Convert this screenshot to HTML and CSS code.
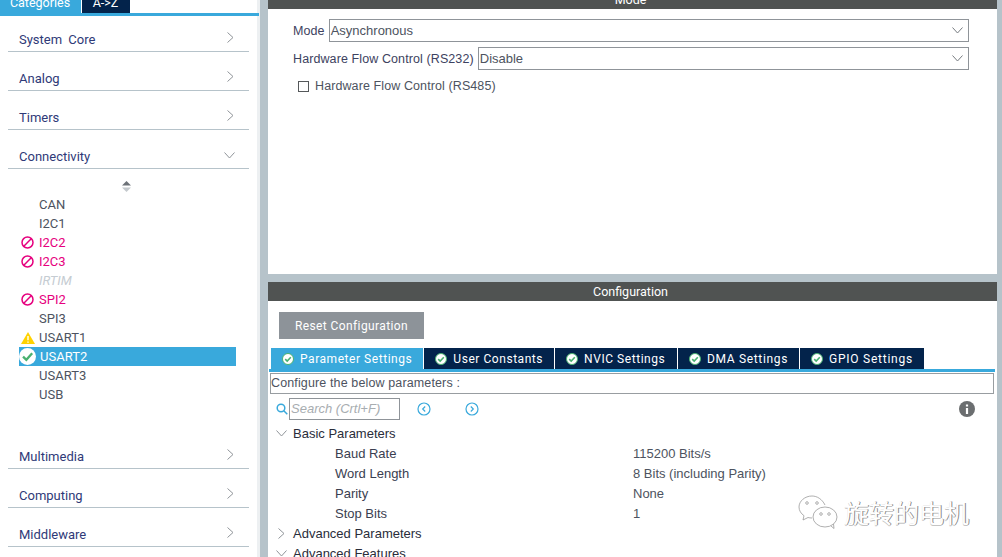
FILE: index.html
```html
<!DOCTYPE html>
<html lang="en">
<head>
<meta charset="utf-8">
<title>USART2 Configuration</title>
<link rel="stylesheet" href="styles.css">
</head>
<body>
<aside class="sidebar">
  <nav class="side-tabs">
    <div class="side-tab side-tab-active">Categories</div>
    <div class="side-tab">A-&gt;Z</div>
  </nav>
  <div class="cats">
    <div class="acc"><span>System Core</span><svg class="chev-r" viewBox="0 0 7 11"><path d="M.5.5 6 5.5.5 10.5"/></svg></div>
    <div class="acc"><span>Analog</span><svg class="chev-r" viewBox="0 0 7 11"><path d="M.5.5 6 5.5.5 10.5"/></svg></div>
    <div class="acc"><span>Timers</span><svg class="chev-r" viewBox="0 0 7 11"><path d="M.5.5 6 5.5.5 10.5"/></svg></div>
    <div class="acc"><span>Connectivity</span><svg class="chev-d" viewBox="0 0 11 7"><path d="M.5.5 5.5 6 10.5.5"/></svg></div>
    <div class="peri-list">
      <svg class="sort" viewBox="0 0 9 11"><path class="sort-up" d="M4.5 0 9 4.5H0z"/><path class="sort-down" d="M0 6.5H9L4.5 11z"/></svg>
      <div class="peri"><i class="slot"></i>CAN</div>
      <div class="peri"><i class="slot"></i>I2C1</div>
      <div class="peri peri-block"><i class="slot"><svg class="ic-block" viewBox="0 0 13 13"><circle cx="6.5" cy="6.5" r="5.5"/><path d="M2.8 10.2 10.2 2.8"/></svg></i>I2C2</div>
      <div class="peri peri-block"><i class="slot"><svg class="ic-block" viewBox="0 0 13 13"><circle cx="6.5" cy="6.5" r="5.5"/><path d="M2.8 10.2 10.2 2.8"/></svg></i>I2C3</div>
      <div class="peri peri-off"><i class="slot"></i>IRTIM</div>
      <div class="peri peri-block"><i class="slot"><svg class="ic-block" viewBox="0 0 13 13"><circle cx="6.5" cy="6.5" r="5.5"/><path d="M2.8 10.2 10.2 2.8"/></svg></i>SPI2</div>
      <div class="peri"><i class="slot"></i>SPI3</div>
      <div class="peri"><i class="slot"><svg class="ic-warn" viewBox="0 0 14 12"><path class="warn-bg" d="M7 0 14 12H0z"/><path class="warn-mark" d="M7 4v4.2M7 9.4v1.3"/></svg></i>USART1</div>
      <div class="peri peri-sel"><i class="slot"><svg class="ic-ok" viewBox="0 0 16 16"><circle cx="8" cy="8" r="8"/><path d="M3.8 8.2 6.9 11.2 12.4 5"/></svg></i>USART2</div>
      <div class="peri"><i class="slot"></i>USART3</div>
      <div class="peri"><i class="slot"></i>USB</div>
    </div>
    <div class="acc"><span>Multimedia</span><svg class="chev-r" viewBox="0 0 7 11"><path d="M.5.5 6 5.5.5 10.5"/></svg></div>
    <div class="acc"><span>Computing</span><svg class="chev-r" viewBox="0 0 7 11"><path d="M.5.5 6 5.5.5 10.5"/></svg></div>
    <div class="acc"><span>Middleware</span><svg class="chev-r" viewBox="0 0 7 11"><path d="M.5.5 6 5.5.5 10.5"/></svg></div>
  </div>
</aside>
<main class="main">
  <section class="panel-mode">
    <header class="panel-head panel-head-clipped">Mode</header>
    <div class="mode-form">
      <div class="form-row"><label>Mode</label><div class="select">Asynchronous<svg class="chev-sel" viewBox="0 0 11 7"><path d="M.5.5 5.5 6 10.5.5"/></svg></div></div>
      <div class="form-row"><label>Hardware Flow Control (RS232)</label><div class="select">Disable<svg class="chev-sel" viewBox="0 0 11 7"><path d="M.5.5 5.5 6 10.5.5"/></svg></div></div>
      <div class="check-row"><i class="checkbox"></i>Hardware Flow Control (RS485)</div>
    </div>
  </section>
  <section class="panel-config">
    <header class="panel-head">Configuration</header>
    <button class="reset">Reset Configuration</button>
    <div class="cfg-tabs">
      <div class="cfg-tab cfg-tab-active"><svg class="tab-ok" viewBox="0 0 12 12"><circle cx="6" cy="6" r="5.5"/><path d="M3.2 6.1 5.2 8 8.8 4.2"/></svg>Parameter Settings</div>
      <div class="cfg-tab"><svg class="tab-ok" viewBox="0 0 12 12"><circle cx="6" cy="6" r="5.5"/><path d="M3.2 6.1 5.2 8 8.8 4.2"/></svg>User Constants</div>
      <div class="cfg-tab cfg-tab-nvic"><svg class="tab-ok" viewBox="0 0 12 12"><circle cx="6" cy="6" r="5.5"/><path d="M3.2 6.1 5.2 8 8.8 4.2"/></svg>NVIC Settings</div>
      <div class="cfg-tab cfg-tab-dma"><svg class="tab-ok" viewBox="0 0 12 12"><circle cx="6" cy="6" r="5.5"/><path d="M3.2 6.1 5.2 8 8.8 4.2"/></svg>DMA Settings</div>
      <div class="cfg-tab cfg-tab-gpio"><svg class="tab-ok" viewBox="0 0 12 12"><circle cx="6" cy="6" r="5.5"/><path d="M3.2 6.1 5.2 8 8.8 4.2"/></svg>GPIO Settings</div>
    </div>
    <div class="tab-line"></div>
    <div class="desc">Configure the below parameters :</div>
    <div class="search-row">
      <svg class="ic-search" viewBox="0 0 12 12"><circle cx="5" cy="5" r="3.8"/><path d="M7.8 7.8 11.3 11.3"/></svg>
      <div class="search">Search (Crtl+F)</div>
      <svg class="ic-nav ic-prev" viewBox="0 0 14 14"><circle cx="7" cy="7" r="6"/><path d="M8.2 4.5 5.7 7 8.2 9.5"/></svg>
      <svg class="ic-nav ic-next" viewBox="0 0 14 14"><circle cx="7" cy="7" r="6"/><path d="M5.8 4.5 8.3 7 5.8 9.5"/></svg>
      <svg class="ic-info" viewBox="0 0 16 16"><circle cx="8" cy="8" r="8"/><path d="M8 3.4v2M8 7v6"/></svg>
    </div>
    <div class="tree">
      <div class="tree-row tree-group"><svg class="tree-d" viewBox="0 0 11 7"><path d="M.5.5 5.5 6 10.5.5"/></svg>Basic Parameters</div>
      <div class="tree-row tree-leaf"><span class="tree-key">Baud Rate</span><span>115200 Bits/s</span></div>
      <div class="tree-row tree-leaf"><span class="tree-key">Word Length</span><span>8 Bits (including Parity)</span></div>
      <div class="tree-row tree-leaf"><span class="tree-key">Parity</span><span>None</span></div>
      <div class="tree-row tree-leaf"><span class="tree-key">Stop Bits</span><span>1</span></div>
      <div class="tree-row tree-group"><svg class="tree-r" viewBox="0 0 7 11"><path d="M.5.5 6 5.5.5 10.5"/></svg>Advanced Parameters</div>
      <div class="tree-row tree-group"><svg class="tree-d" viewBox="0 0 11 7"><path d="M.5.5 5.5 6 10.5.5"/></svg>Advanced Features</div>
    </div>
  </section>
</main>
<div class="watermark">
  <svg class="wx" viewBox="0 0 40 34"><path d="M14 1C7 1 1 6 1 12c0 3.600 2 6.600 5 8.700L5 25l5-2.500c1.300.3 2.500.5 4 .5"/><path d="M27 10C24 4 19 1 14 1"/><ellipse cx="27" cy="22" rx="12" ry="10"/><path d="M33 31l3 2.500-.5-4.500"/><circle cx="9" cy="8" r="1.300"/><circle cx="19" cy="8" r="1.300"/><circle cx="23" cy="19" r="1.300"/><circle cx="31" cy="19" r="1.300"/></svg>
  <span class="wm-text">旋转的电机</span>
</div>
</body>
</html>
```
FILE: styles.css
```css
* { box-sizing: border-box; }
html, body { margin: 0; height: 557px; overflow: hidden; }
body {
  display: flex;
  position: relative;
  background: #b6c3ca;
  font-family: Roboto, "Liberation Sans", sans-serif;
  font-size: 13px;
  color: #3d4260;
}
svg { display: block; fill: none; flex: none; }

/* Sidebar */
.sidebar { width: 260px; margin-right: 8px; flex: none; background: #fff; border-right: 3px solid #edf0f2; height: 557px; }
.side-tabs { display: flex; height: 13px; gap: 1px; width: 259px; }
.side-tab { width: 48px; height: 13px; background: #03234b; color: #fff; line-height: 5px; text-align: center; font-size: 12.500px; padding-right: 1px; }
.side-tab-active { width: 81px; background: #39a9dc; }
.cats { border-top: 3px solid #39a9dc; width: 259px; padding-top: 10px; }
.acc { height: 26px; margin: 0 10px 13px 8px; padding: 1px 15px 0 11px; border-bottom: 1px solid #b6c3ca; display: flex; align-items: center; justify-content: space-between; color: #2f3a78; word-spacing: 3px; }
.chev-r { width: 7px; height: 11px; margin-top: -3px; stroke: #8f9499; }
.chev-d { width: 11px; height: 7px; margin: -2px -1px 0 0; stroke: #8f9499; }

.peri-list { height: 249px; margin-top: -1px; margin-bottom: 13px; }
.sort { width: 9px; height: 11px; margin: 0 0 3px 122px; }
.sort-up { fill: #6d7278; }
.sort-down { fill: #c4c9cd; }
.peri { height: 19px; width: 217px; margin-left: 19px; display: flex; align-items: center; color: #4d5360; }
.slot { width: 20px; height: 19px; flex: none; display: flex; align-items: center; padding-left: 2px; }
.peri-block { color: #e6007e; }
.peri-off { color: #c5ccd2; font-style: italic; }
.peri-sel { background: #39a9dc; color: #fff; }
.peri-sel .slot { width: 21px; padding-left: 0; }
.ic-block { width: 13px; height: 13px; stroke: #e6007e; stroke-width: 1.5; }
.ic-warn { width: 14px; height: 12px; }
.warn-bg { fill: #ffd200; }
.warn-mark { stroke: #fff; stroke-width: 1.4; }
.ic-ok { width: 17px; height: 17px; }
.ic-ok circle { fill: #fff; }
.ic-ok path { stroke: #49b170; stroke-width: 2.2; }

/* Main */
.main { width: 729px; flex: none; display: flex; flex-direction: column; gap: 8px; height: 557px; }
.panel-mode { height: 274px; background: #fff; flex: none; }
.panel-config { flex: 1; background: #fff; overflow: hidden; }
.panel-head { height: 19px; background: #505352; color: #fff; text-align: center; line-height: 19px; font-size: 12.500px; padding-right: 4px; }
.panel-head-clipped { height: 9px; line-height: 0; }
.mode-form { padding: 10px 28px 0 25px; }
.form-row { display: flex; align-items: center; gap: 4px; height: 23px; margin-bottom: 5px; font-family: "Liberation Sans", sans-serif; font-size: 12.500px; letter-spacing: .1px; }
.select { flex: 1; height: 23px; border: 1px solid #8f9499; display: flex; align-items: center; justify-content: space-between; padding: 0 5px 0 1px; color: #4d5360; font-size: 13px; letter-spacing: 0; }
.chev-sel { width: 11px; height: 7px; stroke: #777c80; }
.check-row { display: flex; align-items: center; gap: 6px; padding-left: 5px; margin-top: 9px; font-family: "Liberation Sans", sans-serif; font-size: 12.500px; letter-spacing: .1px; color: #4d5360; }
.checkbox { width: 11px; height: 11px; border: 1px solid #55585a; flex: none; }

.reset { display: block; margin: 11px 0 9px 11px; width: 145px; height: 27px; background: #8d9399; border: 0; color: #fff; font-family: Roboto, sans-serif; font-size: 12px; letter-spacing: .4px; padding: 0; }
.cfg-tabs { display: flex; gap: 1px; margin-left: 3px; height: 21px; }
.cfg-tab { height: 21px; background: #03234b; color: #fff; display: flex; align-items: center; gap: 6px; padding: 0 11px; font-size: 12px; letter-spacing: .55px; white-space: nowrap; }
.cfg-tab-active { background: #39a9dc; }
.cfg-tab-nvic { width: 122px; }
.cfg-tab-dma { width: 121px; letter-spacing: .65px; }
.cfg-tab-gpio { width: 124px; letter-spacing: .75px; }
.tab-ok { width: 12px; height: 12px; }
.tab-ok circle { fill: #fff; stroke: #49b170; stroke-width: 1; }
.tab-ok path { stroke: #49b170; stroke-width: 1.6; }
.tab-line { height: 3px; margin: 0 2px 1px 1px; background: #39a9dc; }
.desc { height: 21px; margin: 0 3px 4px 2px; border: 1px solid #989da1; line-height: 19px; font-family: "Liberation Sans", sans-serif; font-size: 12.500px; color: #4d5360; letter-spacing: .13px; }
.search-row { display: flex; align-items: center; height: 22px; padding-left: 8px; padding-right: 22px; margin-bottom: 3px; }
.ic-search { width: 12px; height: 12px; stroke: #39a9dc; stroke-width: 1.500; margin-right: 1px; }
.search { width: 111px; height: 22px; border: 1px solid #8f9499; color: #a8adb1; font-style: italic; font-family: "Liberation Sans", sans-serif; font-size: 13px; line-height: 20px; padding-left: 1px; }
.ic-nav { width: 14px; height: 14px; stroke: #39a9dc; stroke-width: 1.200; }
.ic-prev { margin-left: 17px; }
.ic-next { margin-left: 34px; }
.ic-info { width: 16px; height: 16px; margin-left: auto; }
.ic-info circle { fill: #6b6e70; }
.ic-info path { stroke: #fff; stroke-width: 2.200; }
.tree { font-family: "Liberation Sans", sans-serif; font-size: 13px; }
.tree-row { height: 20px; display: flex; align-items: center; white-space: nowrap; }
.tree-group { color: #2a2d3a; padding-left: 25px; position: relative; }
.tree-leaf { color: #4d5360; padding-left: 67px; }
.tree-key { width: 298px; color: #3a3e50; }
.tree-d { position: absolute; left: 8px; top: 7px; width: 11px; height: 7px; stroke: #8f9499; }
.tree-r { position: absolute; left: 10px; top: 5px; width: 7px; height: 11px; stroke: #8f9499; }

/* Watermark over the page */
.watermark { position: absolute; left: 798px; top: 495px; display: flex; align-items: center; gap: 6px; }
.wx { width: 40px; height: 34px; stroke: #9a9a9a; stroke-width: .8; fill: none; }
.wx ellipse { fill: #fff; }
.wm-text { font-family: "Noto Sans CJK SC", sans-serif; font-size: 25px; line-height: 34px; color: #fff; text-shadow: 1px 0 0 #8a8a8a, 0 1px 0 #c4c4c4; }
```
